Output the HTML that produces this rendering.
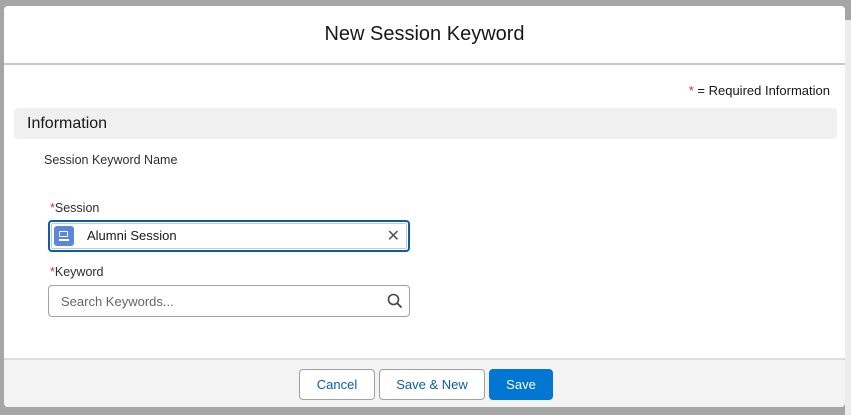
<!DOCTYPE html>
<html><head><style>
body{margin:0;width:851px;height:415px;background:#a6a6a6;position:relative;overflow:hidden;font-family:"Liberation Sans",sans-serif;}
.rp{position:absolute;left:845px;top:20px;width:6px;height:395px;background:#ececec;}
.modal{position:absolute;left:4px;top:6px;width:841px;height:401px;background:#fff;border-radius:4px;overflow:hidden;}
.hdr{height:57px;border-bottom:2px solid #c9c9c9;text-align:center;line-height:57px;font-size:20px;color:#181818;}
.abs{position:absolute;}
.req{right:15px;top:77px;font-size:13px;color:#181818;}
.sec{left:10px;top:102px;width:823px;height:31px;background:#f0f0f0;border-radius:4px;font-size:16px;line-height:31px;color:#181818;}
.lbl{font-size:12.5px;color:#2e2e2e;}
.star{color:#c23934;}
.inp{left:44px;width:362px;height:32px;border:1px solid #a0a0a0;border-radius:4px;box-sizing:border-box;}
.foot{left:0;top:352px;width:841px;height:49px;background:#f3f3f3;border-top:2px solid #dddddd;}
.btn{position:absolute;top:9px;height:31px;box-sizing:border-box;border:1px solid #a0a0a0;border-radius:4px;background:#fff;color:#0b5cab;font-size:13px;text-align:center;line-height:29px;}
</style></head><body>
<div class="rp"></div>
<div class="modal">
<div class="hdr">New Session Keyword</div>
<div class="abs req"><span class="star">*</span> = Required Information</div>
<div class="abs sec"><span style="padding-left:13px">Information</span></div>
<div class="abs lbl" style="left:40px;top:147px">Session Keyword Name</div>
<div class="abs lbl" style="left:46px;top:195px"><span class="star">*</span>Session</div>
<div class="abs" style="left:44px;top:214px;width:362px;height:32px;border:2px solid #0b5cab;border-radius:4px;box-sizing:border-box;">
 <div style="position:absolute;left:1px;top:1px;right:1px;bottom:1px;border:1px solid #c9c9c9;border-radius:2px"></div>
 <div style="position:absolute;left:4px;top:4px;width:20px;height:20px;background:#5a87d9;border-radius:3px">
  <div style="position:absolute;left:5px;top:5px;width:9px;height:6px;border:1.5px solid #fff;border-radius:1px;box-sizing:border-box"></div>
  <div style="position:absolute;left:5px;top:13px;width:10px;height:1.5px;background:#fff"></div>
 </div>
 <div style="position:absolute;left:37px;top:6px;font-size:13px;color:#181818">Alumni Session</div>
 <div style="position:absolute;right:8px;top:4px;font-size:16px;color:#555">✕</div>
</div>
<div class="abs lbl" style="left:46px;top:259px"><span class="star">*</span>Keyword</div>
<div class="abs inp" style="top:279px;">
 <div style="position:absolute;left:12px;top:8px;font-size:13px;color:#666">Search Keywords...</div>
 <svg style="position:absolute;right:6px;top:7px" width="16" height="16" viewBox="0 0 16 16"><circle cx="6.5" cy="6.5" r="5" fill="none" stroke="#444" stroke-width="1.6"/><path d="M10.2 10.2L14.5 14.5" stroke="#444" stroke-width="1.8"/></svg>
</div>
<div class="abs foot">
 <div class="btn" style="left:295px;width:76px">Cancel</div>
 <div class="btn" style="left:375px;width:106px">Save &amp; New</div>
 <div class="btn" style="left:485px;width:64px;background:#0176d3;border-color:#0176d3;color:#fff">Save</div>
</div>
</div>
</body></html>
